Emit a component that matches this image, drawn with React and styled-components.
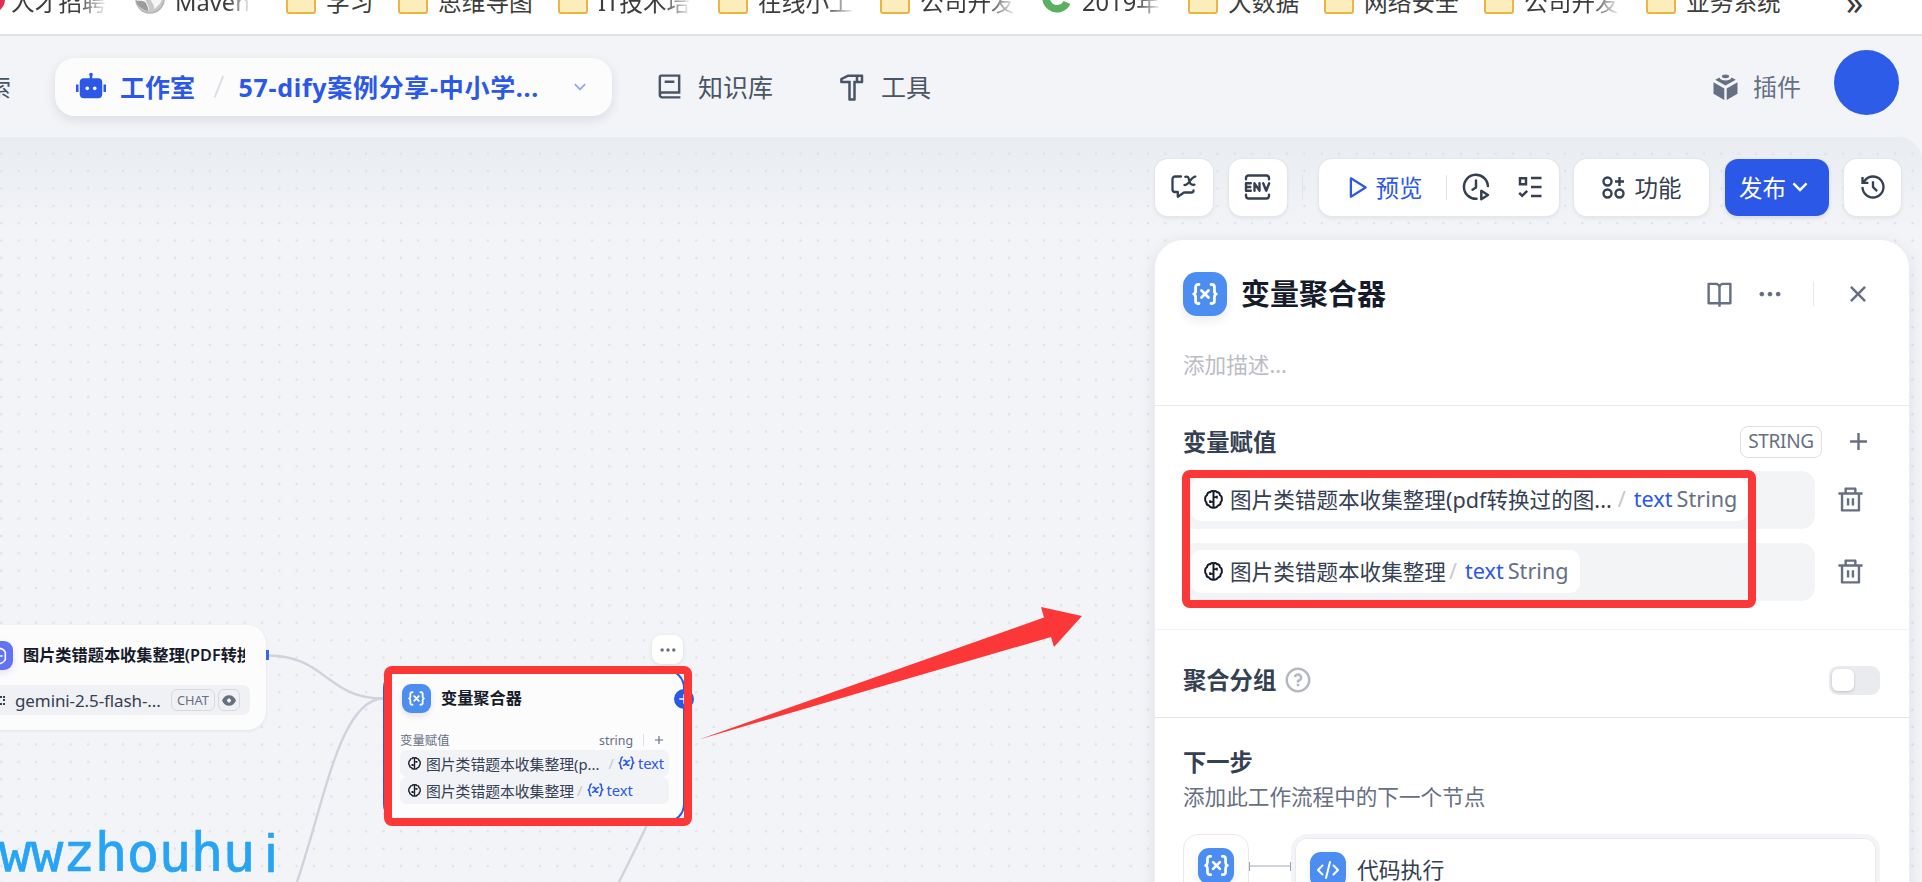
import styled, { createGlobalStyle, css } from 'styled-components';
import {
  RiRobot2Fill,
  RiBook2Line,
  RiHammerLine,
  RiArrowDownSLine,
  RiHistoryLine,
  RiBookOpenLine,
  RiMoreFill,
  RiCloseLine,
  RiAddLine,
  RiDeleteBinLine,
  RiQuestionLine,
  RiPlayLargeLine,
} from 'react-icons/ri';

const bookmarks = [
  { name: '人才招聘', icon: 'red', width: 160, fade: true },
  { name: 'Maven', icon: 'globe', width: 151, fade: true },
  { name: '学习', icon: 'folder', width: 112 },
  { name: '思维导图', icon: 'folder', width: 160 },
  { name: 'IT技术培', icon: 'folder', width: 160, fade: true },
  { name: '在线小工', icon: 'folder', width: 162, fade: true },
  { name: '公司开发', icon: 'folder', width: 162, fade: true },
  { name: '2019年', icon: 'green', width: 146, fade: true },
  { name: '大数据', icon: 'folder', width: 136 },
  { name: '网络安全', icon: 'folder', width: 160 },
  { name: '公司开发', icon: 'folder', width: 162, fade: true },
  { name: '业务系统', icon: 'folder', width: 160 },
];

const variables = [
  { node: '图片类错题本收集整理(pdf转换过的图...', short: '图片类错题本收集整理(p...', name: 'text', type: 'String', gap: 6 },
  { node: '图片类错题本收集整理', short: '图片类错题本收集整理', name: 'text', type: 'String', gap: 3 },
];

function VariableIcon({ size }) {
  return (
    <svg width={size} height={size} viewBox="0 0 26 26" fill="none" stroke="#fff" strokeWidth="2.8" strokeLinecap="round" strokeLinejoin="round">
      <path d="M7 3.5H6a2.4 2.4 0 0 0-2.4 2.4v4c0 1.6-.7 2.6-1.9 3.1 1.2.5 1.9 1.5 1.9 3.1v4A2.4 2.4 0 0 0 6 22.5h1" />
      <path d="M19 3.5h1a2.4 2.4 0 0 1 2.4 2.4v4c0 1.6.7 2.6 1.9 3.1-1.2.5-1.9 1.5-1.9 3.1v4a2.4 2.4 0 0 1-2.4 2.4h-1" />
      <path d="M9.5 9.5l7 7M16.5 9.5l-7 7" />
    </svg>
  );
}

function InlineVariableIcon() {
  return (
    <svg width="17" height="14" viewBox="0 0 17 14" fill="none" stroke="#2b58e6" strokeWidth="1.6" strokeLinecap="round" strokeLinejoin="round">
      <path d="M4.5 1C3 1 3.2 2 3 3.5 2.9 5.500 2.600 6.500 1.200 7c1.300.4 1.400 1.300 1.400 3 0 1.800.2 2.500 1.400 2.700" />
      <path d="M13 1c1.300.2 1.500 1 1.400 2.700 0 1.700.1 2.700 1.400 3.100-1.400.6-1.700 1.500-1.800 3.400-.2 1.700-.2 2.600-1.600 2.600" />
      <path d="M6 4.500c1.400-.5 2 .2 2.300 1.800.4 2 .9 3.500 2.500 2.800M11.500 4.500C9.500 4 7.500 9.700 5.600 9.200" />
    </svg>
  );
}

function ModelIcon({ size }) {
  return (
    <svg width={size} height={size} viewBox="0 0 20 20" fill="none" stroke="#151b2a" strokeWidth="2.1" strokeLinejoin="round">
      <path d="M10 1.300c-1.500-.5-3 0-3.800 1.200C4.500 2.300 3.200 3.700 3.300 5.300 1.800 6 1 7.500 1.400 9c-.5 1.500 0 3 1.100 3.900-.1 1.800 1 3.200 2.700 3.400.9 1.700 2.900 2.500 4.800 2.200 1.900.3 3.900-.5 4.800-2.200 1.700-.2 2.800-1.600 2.700-3.400 1.100-.9 1.600-2.400 1.100-3.900.4-1.500-.4-3-1.900-3.700.1-1.600-1.200-3-2.900-2.800C13 1.300 11.500.8 10 1.300z" />
      <path d="M10 1.500v17M10 7.500h3.500M6.800 12.500H10M6.500 10.800v3M13.500 6v3" />
    </svg>
  );
}

function CodeIcon() {
  return (
    <svg width="24" height="24" viewBox="0 0 24 24" fill="none" stroke="#fff" strokeWidth="2" strokeLinecap="round" strokeLinejoin="round">
      <path d="M6.500 7.500L2 12l4.500 4.500M17.500 7.500L22 12l-4.500 4.500M14 4l-4 16" />
    </svg>
  );
}

function PluginIcon() {
  return (
    <svg width="25" height="26" viewBox="0 0 25 26" fill="#676f83">
      <ellipse cx="12.5" cy="2.3" rx="3.6" ry="1.9" />
      <path d="M2.200 5.800L6.500 3.400c.8 2.300 3 3 6 3s5.200-.7 6-3l4.300 2.400-10.300 5.800z" />
      <path d="M.5 8.200l10.800 6.200V26L.5 19.800zM24.500 8.200l-10.800 6.200V26l10.800-6.200z" />
    </svg>
  );
}

function EnvIcon() {
  return (
    <svg width="27" height="26" viewBox="0 0 27 26" fill="none" stroke="#354052" strokeWidth="2.4" strokeLinecap="round" strokeLinejoin="round">
      <path d="M2 5.300V4.300A2.500 2.500 0 0 1 4.500 1.500h18A2.500 2.500 0 0 1 25 4.300v1M2 20.700v1a2.500 2.500 0 0 0 2.500 2.800h18a2.500 2.500 0 0 0 2.500-2.800v-1" />
      <path d="M6.800 9.300H2v7.400h4.800M2 13h4.300M10.500 16.700V9.300l5 7.400V9.300M19.200 9.300l3 7.400 3-7.400" />
    </svg>
  );
}

function ChatVariableIcon() {
  return (
    <svg width="26" height="24" viewBox="0 0 26 24" fill="none" stroke="#354052" strokeWidth="2.3" strokeLinecap="round" strokeLinejoin="round">
      <path d="M10 1.500H4A2.500 2.500 0 0 0 1.500 4v10.500A2.500 2.500 0 0 0 4 17h2.800v4.800L13 17.500h7.500a2 2 0 0 0 2-2" />
      <path d="M14.300 1.800c2.300-.8 3.200.2 3.800 3.200s1.500 5.600 5.300 4.700M24.300 1.600c-3.500-.6-7.200 9.600-10.800 8.400" />
    </svg>
  );
}

function RunHistoryIcon() {
  return (
    <svg width="28" height="28" viewBox="0 0 28 28" fill="none" stroke="#354052" strokeWidth="2.5" strokeLinecap="round" strokeLinejoin="round">
      <path d="M14.500 25.800A12 12 0 1 1 25.900 13" />
      <path d="M14 7.500v7l-3.500 2.200" />
      <path d="M19.300 17.800v8.400l6.700-4.200z" />
    </svg>
  );
}

function ChecklistIcon() {
  return (
    <svg width="24" height="22" viewBox="0 0 24 22" fill="none" stroke="#354052" strokeWidth="2.5">
      <path d="M2 2.200h6v6H2zM13 2h10.500M13 11h10.500M13 20h10.500M1.200 16.800l3 3 5-5" />
    </svg>
  );
}

function FeatureIcon() {
  return (
    <svg width="23" height="23" viewBox="0 0 23 23" fill="none" stroke="#354052" strokeWidth="2.4">
      <circle cx="5.5" cy="5.5" r="4" />
      <circle cx="5.5" cy="17.5" r="4" />
      <circle cx="17.5" cy="17.5" r="4" />
      <path d="M17.500 1v9M13 5.500h9" />
    </svg>
  );
}

function BookmarkIcon({ kind }) {
  if (kind === 'folder') return <Folder />;
  return (
    <svg width="30" height="30" viewBox="0 0 30 30">
      {kind === 'red' && <circle cx="15" cy="15" r="15" fill="#dd2f52" />}
      {kind === 'globe' && (
        <>
          <circle cx="15" cy="15" r="14" fill="#c9c9c9" stroke="#b3b3b3" strokeWidth="1.5" />
          <path d="M2 14c4 0 7 0 9 3 1 3 3 4 3 9C7 28 2 23 2 14zM15 9c5 2 6 5 12 5-1 6-5 9-8 11 1-5-6-9-4-16z" fill="#f6f6f6" />
          <path d="M1.500 17c5-1 9 0 10 3 .5 2 2 3 1.500 7C7 26 2 22 1.500 17z" fill="#9c9c9c" />
        </>
      )}
      {kind === 'green' && <path d="M25 18.500A11 11 0 1 1 25 9" fill="none" stroke="#5bb05f" strokeWidth="7.5" />}
    </svg>
  );
}

function VariableRow({ item }) {
  return (
    <VarRow>
      <VarField>
        <VarChip>
          <ModelIcon size={19} />
          <VarNode>{item.node}</VarNode>
          <Slash $gap={item.gap}>/</Slash>
          <VarName>{item.name}</VarName>
          <VarType>{item.type}</VarType>
        </VarChip>
      </VarField>
      <RiDeleteBinLine size={29} />
    </VarRow>
  );
}

export default function App() {
  return (
    <>
      <GlobalStyle />
      <Page>
        <BookmarkBar>
          {bookmarks.map((b, i) => (
            <Bookmark key={i} $width={b.width}>
              <BookmarkIcon kind={b.icon} />
              <BookmarkName $fade={b.fade}>{b.name}</BookmarkName>
            </Bookmark>
          ))}
          <MoreBookmarks>»</MoreBookmarks>
        </BookmarkBar>

        <Header>
          <NavRest>索</NavRest>
          <NavPill>
            <RiRobot2Fill size={30} />
            <PillName>工作室</PillName>
            <PillSlash />
            <PillTitle>57-dify案例分享-中小学...</PillTitle>
            <PillArrow size={22} />
          </NavPill>
          <NavItem $left={43} $gap={14}>
            <RiBook2Line size={29} />
            <NavText>知识库</NavText>
          </NavItem>
          <NavItem $left={64} $gap={14}>
            <RiHammerLine size={30} />
            <NavText>工具</NavText>
          </NavItem>
          <Plugins>
            <PluginIcon />
            <NavText>插件</NavText>
          </Plugins>
          <Avatar />
        </Header>

        <Canvas>
          <Edges width="1156" height="745" viewBox="0 137 1156 745">
            <path d="M268 655.500C326 655.500 326 698.500 384 698.500" />
            <path d="M384 698.500C340 698.500 325 800 297 882" />
            <path d="M684 742C660 800 640 840 618 884" />
          </Edges>

          <LlmNode>
            <NodeHead>
              <NodeIcon $color="#6172f3">
                <svg width="18" height="18" viewBox="0 0 20 20" fill="none" stroke="#fff" strokeWidth="1.8" strokeLinejoin="round">
                  <path d="M10 1.500c3 0 5 1 7 4.200v8.600c-2 2.700-4 4.200-7 4.200s-6-2-7.500-4.200V5.700c2-3 4.500-4.200 7.500-4.200z" />
                  <path d="M10 7v6M10 10h4" />
                </svg>
              </NodeIcon>
              <NodeTitle>图片类错题本收集整理(PDF转换</NodeTitle>
            </NodeHead>
            <ModelRow>
              <ModelDots />
              <ModelName>gemini-2.5-flash-...</ModelName>
              <ModelTag $width={44}>CHAT</ModelTag>
              <ModelTag $width={22}>
                <svg width="14" height="11" viewBox="0 0 14 11">
                  <path d="M0 5.500C1.500 2 4 .3 7 .3s5.500 1.700 7 5.200c-1.500 3.500-4 5.200-7 5.200S1.500 9 0 5.500z" fill="#676f83" />
                  <path d="M7 3.500v4M5 5.500h4" stroke="#fcfcfd" strokeWidth="1.8" />
                </svg>
              </ModelTag>
            </ModelRow>
            <Handle />
          </LlmNode>

          <NodeMenu>
            <RiMoreFill size={20} />
          </NodeMenu>

          <AggregatorNode>
            <NodeHead $inset={2}>
              <NodeIcon $color="#4c8df2">
                <VariableIcon size={17} />
              </NodeIcon>
              <NodeTitle>变量聚合器</NodeTitle>
            </NodeHead>
            <NodeLabel>
              <span>变量赋值</span>
              <NodeType>string</NodeType>
              <NodeLabelDivider />
              <RiAddLine size={14} />
            </NodeLabel>
            {variables.map((v) => (
              <NodeVar key={v.node}>
                <ModelIcon size={13} />
                <NodeVarName>{v.short}</NodeVarName>
                <NodeSlash $gap={v.gap}>/</NodeSlash>
                <InlineVariableIcon />
                <NodeVarText>{v.name}</NodeVarText>
              </NodeVar>
            ))}
            <AddNext>
              <RiAddLine size={16} />
            </AddNext>
          </AggregatorNode>

          <Watermark>
            {[...'wwzhouhui'].map((c, i) => (
              <WatermarkLetter key={i} $plain={c === 'i'}>{c}</WatermarkLetter>
            ))}
          </Watermark>

          <Toolbar>
            <ToolButton $width={58}><ChatVariableIcon /></ToolButton>
            <ToolButton $width={58}><EnvIcon /></ToolButton>
            <ToolDivider />
            <RunGroup>
              <Preview>
                <RiPlayLargeLine size={27} />
                预览
              </Preview>
              <ToolDivider />
              <RunHistoryIcon />
              <ChecklistIcon />
            </RunGroup>
            <ToolButton $width={135}>
              <FeatureIcon />
              功能
            </ToolButton>
            <Publish>
              发布
              <RiArrowDownSLine size={28} />
            </Publish>
            <ToolButton $width={57}><RiHistoryLine size={28} /></ToolButton>
          </Toolbar>

          <Panel>
            <PanelHead>
              <PanelTitleRow>
                <BlockIcon $size={44}><VariableIcon size={26} /></BlockIcon>
                <PanelTitle>变量聚合器</PanelTitle>
                <PanelActions>
                  <RiBookOpenLine size={29} />
                  <RiMoreFill size={28} />
                  <HeadDivider />
                  <RiCloseLine size={30} />
                </PanelActions>
              </PanelTitleRow>
              <Description>添加描述...</Description>
            </PanelHead>

            <AssignSection>
              <SectionRow>
                <SectionTitle>变量赋值</SectionTitle>
                <TypeBadge>STRING</TypeBadge>
                <RiAddLine size={29} />
              </SectionRow>
              <VarList>
                {variables.map((v) => (
                  <VariableRow key={v.node} item={v} />
                ))}
              </VarList>
            </AssignSection>

            <GroupSection>
              <SectionTitle>聚合分组</SectionTitle>
              <RiQuestionLine size={30} />
              <Toggle><Knob /></Toggle>
            </GroupSection>

            <NextSection>
              <SectionTitle>下一步</SectionTitle>
              <NextHint>添加此工作流程中的下一个节点</NextHint>
              <NextFlow>
                <CurrentBlock>
                  <BlockIcon $size={36}><VariableIcon size={25} /></BlockIcon>
                </CurrentBlock>
                <Connector />
                <NextBlocks>
                  <BlockIcon $size={36}><CodeIcon /></BlockIcon>
                  <NextName>代码执行</NextName>
                </NextBlocks>
              </NextFlow>
            </NextSection>
          </Panel>

          <Highlight $x={384} $y={529} $w={308} $h={160} />
          <Highlight $x={1182} $y={333} $w={574} $h={138} />
          <Arrow width="384" height="134" viewBox="698 607 384 134">
            <path d="M699 739.500L1044 617.500L1041 607L1082 616L1054 647L1051 637Z" />
          </Arrow>
        </Canvas>
      </Page>
    </>
  );
}

const GlobalStyle = createGlobalStyle`
  * {
    box-sizing: border-box;
  }

  body {
    margin: 0;
    overflow: hidden;
    font-family: 'Noto Sans', 'Noto Sans CJK SC', sans-serif;
  }

  svg {
    flex-shrink: 0;
  }
`;

const Page = styled.div`
  display: flex;
  flex-direction: column;
  width: 1922px;
  height: 882px;
  overflow: hidden;
  background: #f2f4f8;
  white-space: nowrap;
`;

const BookmarkBar = styled.div`
  display: flex;
  align-items: flex-end;
  height: 36px;
  padding: 0 0 20px;
  border-bottom: 2px solid #e3e3e3;
  background: #fff;
  overflow: hidden;
  flex-shrink: 0;
`;

const Bookmark = styled.div`
  display: flex;
  align-items: flex-end;
  gap: 10px;
  width: ${({ $width }) => $width}px;
  flex-shrink: 0;

  &:first-child {
    margin-left: -25px;
    gap: 6px;
  }
`;

const Folder = styled.div`
  width: 30px;
  height: 26px;
  border: 2px solid #eab543;
  border-radius: 3px;
  background: #fceebc;
  flex-shrink: 0;
`;

const BookmarkName = styled.span`
  font-size: 23.7px;
  line-height: 24px;
  color: #3c3c3c;

  ${({ $fade }) => $fade && css`
    max-width: 96px;
    overflow: hidden;
    mask-image: linear-gradient(to right, #000 70%, transparent 102%);
  `}
`;

const MoreBookmarks = styled.span`
  margin-left: 40px;
  font-size: 34px;
  line-height: 24px;
  color: #3c3c3c;
`;

const Header = styled.header`
  display: flex;
  align-items: center;
  height: 101px;
  flex-shrink: 0;
  font-size: 25px;
  color: #495464;
`;

const NavText = styled.span`
  padding-bottom: 2px;
`;

const NavRest = styled(NavText)`
  width: 55px;
  text-indent: -14px;
`;

const NavPill = styled.div`
  display: flex;
  align-items: center;
  width: 557px;
  height: 58px;
  padding: 0 21px;
  border-radius: 20px;
  background: #fcfcfd;
  box-shadow: 0 4px 12px rgba(16, 24, 40, 0.1);
  color: #2b58e6;
`;

const PillName = styled(NavText)`
  margin-left: 14px;
  font-weight: 700;
`;

const PillSlash = styled.i`
  width: 1.5px;
  height: 23px;
  margin: 0 19px 0 23px;
  background: #dcdfe5;
  transform: rotate(22deg);
`;

const PillTitle = styled(NavText)`
  width: 304px;
  font-weight: 700;
  letter-spacing: 0.7px;
`;

const PillArrow = styled(RiArrowDownSLine)`
  margin-left: 26px;
  color: #95aaf3;
`;

const NavItem = styled.div`
  display: flex;
  align-items: center;
  gap: ${({ $gap }) => $gap}px;
  margin-left: ${({ $left }) => $left}px;
`;

const Plugins = styled.div`
  display: flex;
  align-items: center;
  gap: 15px;
  margin-left: auto;
  font-size: 24px;
  color: #676f83;
`;

const Avatar = styled.div`
  width: 65px;
  height: 65px;
  margin: -8px 23px 0 33px;
  border-radius: 50%;
  background: #2d5de8;
`;

const Canvas = styled.main`
  position: relative;
  display: flex;
  flex-direction: column;
  align-items: flex-end;
  height: 745px;
  border-top-right-radius: 24px;
  overflow: hidden;
  background:
    radial-gradient(circle, #dfe1e7 1.1px, transparent 1.6px) -7.4px 8px / 17.385px 17.385px,
    linear-gradient(#e9ecf0, #f2f4f8 95px);
`;

const Edges = styled.svg`
  position: absolute;
  top: 0;
  left: 0;
  fill: none;
  stroke: #d0d3dc;
  stroke-width: 2.4;
`;

const LlmNode = styled.div`
  position: absolute;
  top: 488px;
  left: -36px;
  width: 302px;
  height: 105px;
  padding: 16px 16px 0 20px;
  border-radius: 19px;
  background: #fcfcfd;
  box-shadow: 0 1px 3px rgba(16, 24, 40, 0.08);
`;

const NodeHead = styled.div`
  display: flex;
  align-items: center;
  gap: 10px;
  padding-left: ${({ $inset = 0 }) => $inset}px;
`;

const NodeIcon = styled.div`
  display: flex;
  align-items: center;
  justify-content: center;
  width: 29px;
  height: 29px;
  border-radius: 9px;
  background: ${({ $color }) => $color};
  box-shadow: 0 3px 6px rgba(16, 24, 40, 0.1);
  flex-shrink: 0;
`;

const NodeTitle = styled.div`
  width: 222px;
  overflow: hidden;
  font-size: 16.2px;
  font-weight: 600;
  line-height: 29px;
  color: #151b2a;
`;

const ModelRow = styled.div`
  display: flex;
  align-items: center;
  gap: 3px;
  height: 30px;
  margin-top: 15px;
  padding-left: 16px;
  border-radius: 7px;
  background: #f0f1f5;
`;

const ModelDots = styled.i`
  width: 5px;
  height: 9px;
  border: 2px dotted #354052;
  border-width: 2px 2px 2px 0;
`;

const ModelName = styled.span`
  width: 160px;
  padding-left: 7px;
  font-size: 17px;
  letter-spacing: -0.1px;
  color: #354052;
`;

const ModelTag = styled.span`
  display: flex;
  align-items: center;
  justify-content: center;
  width: ${({ $width }) => $width}px;
  height: 22px;
  border: 1px solid #d5d8df;
  border-radius: 6px;
  font-size: 12.8px;
  color: #676f83;
  flex-shrink: 0;
`;

const Handle = styled.i`
  position: absolute;
  top: 25px;
  right: -3px;
  width: 3px;
  height: 10px;
  background: #3a66e8;
`;

const NodeMenu = styled.div`
  position: absolute;
  top: 498px;
  left: 652px;
  display: flex;
  align-items: center;
  justify-content: center;
  width: 31px;
  height: 29px;
  border-radius: 9px;
  background: #fff;
  box-shadow: 0 1px 4px rgba(16, 24, 40, 0.1);
  color: #676f83;
`;

const AggregatorNode = styled.div`
  position: absolute;
  top: 532px;
  left: 383px;
  width: 302px;
  height: 154px;
  padding: 13px 14px 0 15px;
  border: 2px solid #2b58e6;
  border-radius: 19px;
  background: #fcfcfd;
`;

const NodeLabel = styled.div`
  display: flex;
  align-items: center;
  height: 20px;
  margin-top: 17px;
  padding-right: 3px;
  font-size: 12.4px;
  color: #676f83;
`;

const NodeType = styled.span`
  margin-left: auto;
`;

const NodeLabelDivider = styled.i`
  width: 1px;
  height: 12px;
  margin: 0 8px 0 10px;
  background: #dcdfe5;
`;

const NodeVar = styled.div`
  display: flex;
  align-items: center;
  height: 26.5px;
  margin-bottom: 0.5px;
  padding: 0 0 0 8px;
  border-radius: 7px;
  background: #f2f3f7;
  font-size: 14.8px;
`;

const NodeVarName = styled.span`
  margin-left: 5px;
  color: #354052;
`;

const NodeSlash = styled.span`
  margin: 0 4px 0 ${({ $gap }) => ($gap > 3 ? 9 : 3)}px;
  color: #c5c9d3;
`;

const NodeVarText = styled.span`
  margin-left: 3px;
  font-size: 14.8px;
  letter-spacing: -0.1px;
  color: #2b58e6;
`;

const AddNext = styled.div`
  position: absolute;
  top: 18px;
  right: -11px;
  display: flex;
  align-items: center;
  justify-content: center;
  width: 20px;
  height: 20px;
  border-radius: 50%;
  background: #2b58e6;
  color: #fff;
`;

const Watermark = styled.div`
  position: absolute;
  top: 683px;
  left: -1px;
  display: flex;
  font-size: 54px;
  line-height: 66px;
  color: #27a4f4;
  -webkit-text-stroke: 0.7px #27a4f4;
`;

const WatermarkLetter = styled.span`
  display: flex;
  justify-content: center;
  width: 32px;
  font-family: ${({ $plain }) => ($plain ? "'Liberation Sans', sans-serif" : "'DejaVu Sans Mono', monospace")};
`;

const Toolbar = styled.div`
  display: flex;
  align-items: center;
  gap: 15.5px;
  margin: 21px 21px 24px 0;
  padding-top: 0.5px;
  font-size: 23.5px;
  color: #354052;
`;

const ToolButton = styled.div`
  display: flex;
  align-items: center;
  justify-content: center;
  gap: 10px;
  width: ${({ $width }) => $width}px;
  height: 57px;
  border-radius: 13px;
  background: #fff;
  box-shadow: 0 0 0 1px #e4e7ec, 0 2px 4px rgba(16, 24, 40, 0.08);
`;

const ToolDivider = styled.i`
  width: 1px;
  height: 25px;
  background: #dfe2e7;
`;

const RunGroup = styled(ToolButton)`
  justify-content: flex-start;
  gap: 0;
  width: 240px;
  padding-left: 24px;

  > svg {
    margin-left: 15px;
  }

  > svg:last-child {
    margin-left: 28px;
  }
`;

const Preview = styled.div`
  display: flex;
  align-items: center;
  gap: 6px;
  margin-right: 23px;
  color: #2b58e6;
`;

const Publish = styled(ToolButton)`
  gap: 0;
  width: 104px;
  background: #2b58e6;
  box-shadow: 0 2px 4px rgba(16, 24, 40, 0.12);
  color: #fff;
`;

const Panel = styled.section`
  width: 754px;
  height: 700px;
  margin-right: 13px;
  border-radius: 28px 28px 0 0;
  background: #fff;
  box-shadow: 0 0 0 1px #ebedf0, 0 4px 18px rgba(16, 24, 40, 0.09);
  z-index: 1;
  flex-shrink: 0;
`;

const PanelHead = styled.div`
  height: 165px;
  padding: 32px 28px 0;
`;

const PanelTitleRow = styled.div`
  display: flex;
  align-items: center;
  height: 44px;
`;

const BlockIcon = styled.div`
  display: flex;
  align-items: center;
  justify-content: center;
  width: ${({ $size }) => $size}px;
  height: ${({ $size }) => $size}px;
  border-radius: ${({ $size }) => ($size > 40 ? 14 : 11)}px;
  background: #4c8df2;
  box-shadow: 0 5px 10px rgba(16, 24, 40, 0.08);
  flex-shrink: 0;
`;

const PanelTitle = styled.h2`
  margin: 0 0 0 14px;
  font-size: 29px;
  font-weight: 700;
  line-height: 44px;
  color: #151b2a;
`;

const PanelActions = styled.div`
  display: flex;
  align-items: center;
  margin-left: auto;
  margin-right: 8px;
  gap: 22px;
  color: #676f83;
`;

const HeadDivider = styled.i`
  width: 1.5px;
  height: 25px;
  margin: 0 7px;
  background: #e4e6ea;
`;

const Description = styled.p`
  margin: 34px 0 0;
  font-size: 21.6px;
  line-height: 30px;
  color: #bbbdc4;
`;

const AssignSection = styled.div`
  height: 224px;
  padding: 20px 28px 0;
  border-top: 1px solid #e8eaed;
`;

const SectionRow = styled.div`
  display: flex;
  align-items: center;
  height: 32px;
  padding-right: 8px;
  color: #676f83;
`;

const SectionTitle = styled.h3`
  margin: 0;
  font-size: 23.3px;
  font-weight: 700;
  line-height: 32px;
  color: #354052;
`;

const TypeBadge = styled.span`
  width: 82px;
  height: 32px;
  margin: 0 22px 0 auto;
  border: 1px solid #dcdfe3;
  border-radius: 8px;
  font-size: 19px;
  line-height: 29px;
  text-align: center;
  letter-spacing: -0.3px;
`;

const VarList = styled.div`
  display: flex;
  flex-direction: column;
  gap: 14px;
  margin-top: 13px;
`;

const VarRow = styled.div`
  display: flex;
  align-items: center;
  gap: 21px;
  color: #676f83;
`;

const VarField = styled.div`
  display: flex;
  align-items: center;
  width: 632px;
  height: 58px;
  padding-left: 8px;
  border-radius: 14px;
  background: #f2f4f5;
`;

const VarChip = styled.div`
  display: flex;
  align-items: center;
  height: 43px;
  padding: 0 11px 0 13px;
  border-radius: 10px;
  background: #fff;
  font-size: 21.6px;

  span {
    padding-bottom: 3px;
  }
`;

const VarNode = styled.span`
  margin-left: 7px;
  color: #354052;
`;

const Slash = styled.span`
  margin: 0 8px 0 ${({ $gap }) => $gap}px;
  color: #c5c9d3;
`;

const VarName = styled.span`
  color: #2b58e6;
`;

const VarType = styled.span`
  margin-left: 4px;
`;

const GroupSection = styled.div`
  display: flex;
  align-items: center;
  gap: 7px;
  height: 88px;
  padding: 14px 29px 0 28px;
  border-top: 1px solid #f3f4f6;
  color: #b5b8c2;
`;

const Toggle = styled.div`
  width: 51px;
  height: 29px;
  margin-left: auto;
  padding: 3px;
  border-radius: 9px;
  background: #e9ebef;
`;

const Knob = styled.div`
  width: 22px;
  height: 22px;
  border-radius: 6px;
  background: #fff;
  box-shadow: 0 1px 3px rgba(16, 24, 40, 0.2);
`;

const NextSection = styled.div`
  padding: 28px 28px 0;
  border-top: 1px solid #e1e4e6;
`;

const NextHint = styled.p`
  margin: 3px 0 21px;
  font-size: 21.6px;
  line-height: 32px;
  color: #676f83;
`;

const NextFlow = styled.div`
  display: flex;
  align-items: flex-start;
`;

const CurrentBlock = styled.div`
  display: flex;
  justify-content: center;
  width: 66px;
  height: 66px;
  padding-top: 13px;
  border: 1px solid #e8eaee;
  border-radius: 15px;
`;

const Connector = styled.div`
  width: 42px;
  height: 9px;
  margin-top: 28px;
  border: solid #98a2b3;
  border-width: 0 1.5px;
  background: linear-gradient(#d0d5dc, #d0d5dc) 0 50% / 100% 2px no-repeat;
`;

const NextBlocks = styled.div`
  display: flex;
  align-items: center;
  gap: 11px;
  width: 589px;
  height: 90px;
  padding: 0 0 18px 15px;
  border: 4px solid #f2f4f7;
  border-radius: 16px;
  box-shadow: inset 0 0 0 1px #e8eaee;
  font-size: 21.8px;
  color: #354052;
`;

const NextName = styled.span`
  padding-bottom: 3px;
`;

const Highlight = styled.div`
  position: absolute;
  top: ${({ $y }) => $y}px;
  left: ${({ $x }) => $x}px;
  width: ${({ $w }) => $w}px;
  height: ${({ $h }) => $h}px;
  border: 8px solid #fb3737;
  border-radius: 8px;
  z-index: 2;
`;

const Arrow = styled.svg`
  position: absolute;
  top: 470px;
  left: 698px;
  fill: #fb3737;
`;
